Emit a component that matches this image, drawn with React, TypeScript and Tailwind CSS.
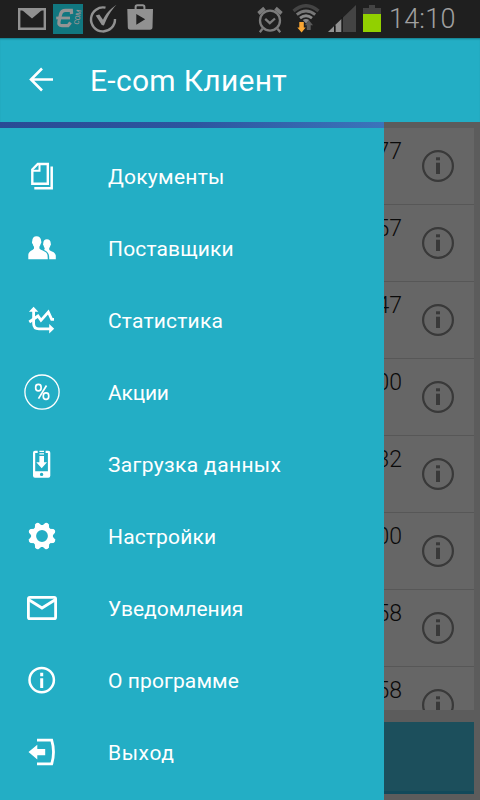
import type { ReactNode } from 'react';

interface MenuItem {
  label: string;
  tracking: string;
  icon: ReactNode;
}

const menuItems: MenuItem[] = [
  {
    label: 'Документы',
    tracking: 'tracking-[0.25px]',
    icon: (
      <svg viewBox="0 0 36 36" className="h-9 w-9" fill="none" stroke="white" strokeWidth="2.4">
        <path d="M8.3 11.5 L13.800 6 H23.8 V25.800 H8.3 Z" />
        <path d="M9 12.800 H15.5 V6.5" strokeWidth="2" />
        <path d="M27.700 8.5 V30.300 H10.3" strokeWidth="2.5" />
      </svg>
    ),
  },
  {
    label: 'Поставщики',
    tracking: 'tracking-[0.15px]',
    icon: (
      <svg viewBox="0 0 36 36" className="h-9 w-9" fill="white">
        <path d="M12.5 6.3c2.900 0 4.800 2 4.600 5c.6.300.3 2.200-.5 2.600c-.3 1.500-.9 2.100-1.200 2.800v1.800c.7 1.700 7.800 2.500 8.100 6.500l.3 4.200H4.300v-4.500c.3-3.700 5-4.500 5.700-6.200v-1.800c-.4-.7-1-1.500-1.200-2.800c-.9-.4-1.100-2.300-.5-2.600C8.100 8.300 9.600 6.300 12.500 6.300z" />
        <path d="M22.900 9.300c2.500 0 4 1.700 3.800 4.200c.5.400.2 1.800-.4 2.200c-.3 1.200-.7 1.800-1.100 2.400v1.500c.7 1.900 6.200 1.800 6.600 6.200v3.400H25.200c.1-4.200-.2-6.900-5-9.200l.6-1.900c-.5-.6-.9-1.200-1.100-2.400c-.7-.4-.9-1.800-.4-2.200C19.100 11 20.500 9.300 22.900 9.300z" />
      </svg>
    ),
  },
  {
    label: 'Статистика',
    tracking: 'tracking-[0.2px]',
    icon: (
      <svg viewBox="0 0 36 36" className="h-9 w-9" fill="none" stroke="white" strokeWidth="2.8">
        <path d="M9.600 8 V21.500 Q9.600 26.800 15 26.800 H26" />
        <path d="M5.300 20 L14 14 L17 18.300 L24.300 10 L27.700 17.300 H30" />
        <path d="M9.600 4.700 L14.300 9.700 H4.900 Z M30.200 26.800 L25.200 31.500 V22.100 Z" fill="white" stroke="none" />
      </svg>
    ),
  },
  {
    label: 'Акции',
    tracking: 'tracking-[-0.2px]',
    icon: (
      <svg viewBox="0 0 36 36" className="h-9 w-9" fill="none" stroke="white">
        <circle cx="18" cy="18.100" r="17.100" strokeWidth="1.300" />
        <rect x="11.700" y="10.300" width="5.400" height="6.500" rx="2.600" strokeWidth="1.700" />
        <rect x="19.300" y="18.900" width="5.400" height="6.500" rx="2.600" strokeWidth="1.700" />
        <path d="M22.500 11.500 L14.500 24.600" strokeWidth="1.700" />
      </svg>
    ),
  },
  {
    label: 'Загрузка данных',
    tracking: 'tracking-[0.35px]',
    icon: (
      <svg viewBox="0 0 36 36" className="h-9 w-9" fill="white">
        <path
          fillRule="evenodd"
          d="M13.700 4.700h-2.700a2 2 0 0 0-2 2v23a2 2 0 0 0 2 2h13.300a2 2 0 0 0 2-2V6.700a2 2 0 0 0-2-2h-2.700v2.400h2.300v18.200H11.200V7.100h2.500zM17.600 26.700a1.700 1.700 0 1 1 0 3.400a1.700 1.700 0 0 1 0-3.400z"
        />
        <path d="M15.400 4.700h4.600v1.200h-4.600zM15.400 7.200h4.600v1.400h-4.600zM15.400 9.900h4.600v6.300h3L17.700 22.200L12.300 16.200h3.100z" />
      </svg>
    ),
  },
  {
    label: 'Настройки',
    tracking: 'tracking-[0.15px]',
    icon: (
      <svg viewBox="0 0 36 36" className="h-9 w-9">
        <circle cx="18" cy="18" r="8.400" fill="none" stroke="white" strokeWidth="5" />
        <g fill="white">
          {[22.5, 67.5, 112.5, 157.5, 202.5, 247.5, 292.5, 337.5].map((angle) => (
            <path key={angle} d="M13.600 9.500 L16 4.800 Q18 3.100 20 4.800 L22.400 9.500 Z" transform={`rotate(${angle} 18 18)`} />
          ))}
        </g>
      </svg>
    ),
  },
  {
    label: 'Уведомления',
    tracking: 'tracking-[0px]',
    icon: (
      <svg viewBox="0 0 36 36" className="h-9 w-9" fill="none" stroke="white" strokeWidth="2.800">
        <rect x="4.400" y="7.300" width="27.200" height="21.400" rx="1.500" />
        <path d="M4.800 9.700 L18 18 L31.200 9.700" />
      </svg>
    ),
  },
  {
    label: 'О программе',
    tracking: 'tracking-[0.1px]',
    icon: (
      <svg viewBox="0 0 36 36" className="h-9 w-9" fill="none" stroke="white" strokeWidth="2.500">
        <circle cx="17.700" cy="18.100" r="12.200" />
        <path d="M17.700 16.300 V26 M17.700 10.800 V14.200" strokeWidth="3" />
      </svg>
    ),
  },
  {
    label: 'Выход',
    tracking: 'tracking-[0.6px]',
    icon: (
      <svg viewBox="0 0 36 36" className="h-9 w-9" fill="none" stroke="white" strokeWidth="2.800">
        <path d="M13 6.100 H27.700 Q31.300 18 27.700 29.900 H13" />
        <path d="M4.500 18 L13.300 10.700 V14.900 H21.200 V21.200 H13.300 V25.400 Z" fill="white" stroke="none" />
      </svg>
    ),
  },
];

const sums = ['77', '57', '47', '00', '32', '00', '58', '58'];

function StatusBar() {
  return (
    <div className="flex h-[38px] shrink-0 items-center bg-[#1f1f1f] pl-[18px]">
      <svg viewBox="0 0 28 22" className="h-[22px] w-7 shrink-0">
        <path d="M1.200 1.200 H26.800 V20.800 H1.200 Z" fill="none" stroke="#919191" strokeWidth="2.400" />
        <path d="M4 2 H24 L14 10.600 Z" fill="#919191" />
      </svg>
      <svg viewBox="0 0 30 30" className="ml-[7px] h-[30px] w-[30px] shrink-0">
        <rect width="30" height="30" fill="#117780" />
        <g fill="none" stroke="#949494">
          <path d="M18.600 10 L18.300 6.300 H12.500 Q8.500 6.300 7.500 10.500 L6 17.500 Q5.200 21.700 9 21.700 H15 L17.500 18.500" strokeWidth="3.300" />
          <path d="M3.200 14 H17" strokeWidth="2.800" />
        </g>
        <text transform="translate(25.5 21) rotate(-78)" fill="#949494" fontFamily="Roboto, sans-serif" fontSize="7" fontWeight="500" textLength="15">
          COM
        </text>
      </svg>
      <svg viewBox="0 0 30 30" className="ml-[6px] h-[30px] w-[30px] shrink-0" fill="none" stroke="#919191">
        <path d="M16.500 3.700 A12 12 0 1 0 26 15" strokeWidth="2.400" />
        <path d="M6.700 11.500 L10.300 10.500 L14 15.800 C17 9.500 20.500 5.500 27.500 .8 C21.500 7 18.500 13 14.900 21.500 L12.800 21 Z" fill="#919191" stroke="none" />
      </svg>
      <svg viewBox="0 0 27 26" className="mb-1 ml-[8px] h-[26px] w-[27px] shrink-0">
        <path d="M8.600 6 V3 Q8.600 1.300 10.300 1.300 H15.700 Q17.400 1.300 17.400 3 V6" fill="none" stroke="#919191" strokeWidth="2" />
        <path fillRule="evenodd" d="M.3 5 H26 L25.500 23 Q25.500 25.800 23 25.800 H3.300 Q.8 25.800 .8 23 Z M9.300 10 V20.700 L18.200 15.300 Z" fill="#919191" />
      </svg>
      <svg viewBox="0 0 26 28" className="ml-[103px] mt-[1px] h-7 w-[26px] shrink-0" fill="none" stroke="#7b7b7b" strokeWidth="2.300">
        <circle cx="13" cy="14.600" r="10" />
        <path d="M8.200 12.800 L12.800 17.200 L18 12.500" />
        <path d="M1.500 7.500 L7.500 2.300 M24.500 7.500 L18.500 2.300" strokeWidth="3.800" />
        <path d="M5.500 22.800 L2.800 26.200 M20.500 22.800 L23.200 26.200" />
      </svg>
      <svg viewBox="0 0 28 30" className="ml-[9px] h-[30px] w-7 shrink-0" fill="none">
        <path d="M1.500 7 Q14 -3.600 26.500 7" stroke="#444" strokeWidth="3.300" />
        <path d="M4.800 10.700 Q14 3.200 23.200 10.700" stroke="#777" strokeWidth="2.900" />
        <path d="M8 14.200 Q14 9.300 20 14.200" stroke="#888" strokeWidth="2.800" />
        <path d="M10.800 16 Q14 13.800 17.200 16 L14 19.500 Z" fill="#888" />
        <path d="M7.300 18 H11.800 V23.500 H13.700 L9.600 28.500 L5.300 23.500 H7.300 Z" fill="#f9a633" />
        <path d="M14.800 26 V21.300 H12.800 L17 16.300 L21 21.300 H18.700 V26 Z" fill="#595959" />
      </svg>
      <svg viewBox="0 0 28 27" className="ml-[8px] mt-[-1px] h-[27px] w-7 shrink-0">
        <path d="M0 27 L28 0 V27 Z" fill="#444" />
        <path d="M0 27 L6 21.200 V27 Z M7.500 27 V19.800 L13.500 14 V27 Z" fill="#919191" />
        <path d="M6 20.500 H7.500 V27 H6 Z M13.500 12 H14.800 V27 H13.500 Z" fill="#161616" />
      </svg>
      <svg viewBox="0 0 18 27" className="ml-[7px] mt-[-1px] h-[27px] w-[18px] shrink-0">
        <path d="M6 0 H12 V3 H18 V9 H0 V3 H6 Z" fill="#444" />
        <rect y="9" width="18" height="18" fill="#92d000" />
      </svg>
      <span className="ml-[8px] text-[27px] font-light leading-[38px] tracking-[0.2px] text-[#a0a0a0]">14:10</span>
    </div>
  );
}

function InfoIcon() {
  return (
    <svg viewBox="0 0 34 34" className="h-[34px] w-[34px] shrink-0" fill="none" stroke="#393939">
      <circle cx="17" cy="17" r="14.900" strokeWidth="2.200" />
      <path d="M17 13.700 V25" strokeWidth="4" />
      <path d="M15 9.800 H19" strokeWidth="3" />
    </svg>
  );
}

export default function App() {
  return (
    <div className="relative flex h-[800px] w-[480px] flex-col overflow-hidden bg-[#5c5c5c] font-[Roboto,sans-serif]">
      <StatusBar />

      <header className="flex h-[84px] shrink-0 items-center bg-[#23aec5] pl-7 text-white shadow-[inset_0_2px_2px_-1px_#147a8a]">
        <svg viewBox="0 0 26 26" className="mb-[3px] h-[26px] w-[26px]" fill="none" stroke="white" strokeWidth="2.600">
          <path d="M25 13.500 H3 M14 2.500 L3 13.500 L14 24.500" />
        </svg>
        <h1 className="ml-[36px] mt-[2px] text-[30px] leading-[84px] tracking-[0.300px]">E-com Клиент</h1>
      </header>

      <main className="flex min-h-0 flex-1 flex-col p-[6px]">
        <div className="h-[582px] shrink-0 overflow-hidden bg-[#666]">
          {sums.map((sum, index) => (
            <div key={index} className="flex h-[77px] items-start justify-end border-b border-[#575757] pr-[19px]">
              <span className="mr-[19px] mt-[10px] text-[23px] font-light leading-7 text-[#0a0a0a]">{sum}</span>
              <div className="mt-[21px]">
                <InfoIcon />
              </div>
            </div>
          ))}
        </div>
        <div className="mt-3 h-[72px] shrink-0 border-b-[3px] border-[#12495a] bg-[#1c4f5c]" />
      </main>

      {/* Drawer lies over the list and leaves the header visible */}
      <aside className="absolute bottom-0 left-0 top-[122px] w-[384px] bg-[#23aec5]">
        <div className="h-[6px] bg-linear-to-r from-[#294b95] via-[#2c559f] to-[#3b74bb]" />
        <nav className="flex flex-col pt-3">
          {menuItems.map((item) => (
            <a key={item.label} className="flex h-[72px] items-center pl-6 text-white">
              {item.icon}
              <span className={`ml-12 mt-[2px] text-[21px] leading-7 ${item.tracking}`}>{item.label}</span>
            </a>
          ))}
        </nav>
      </aside>
    </div>
  );
}
